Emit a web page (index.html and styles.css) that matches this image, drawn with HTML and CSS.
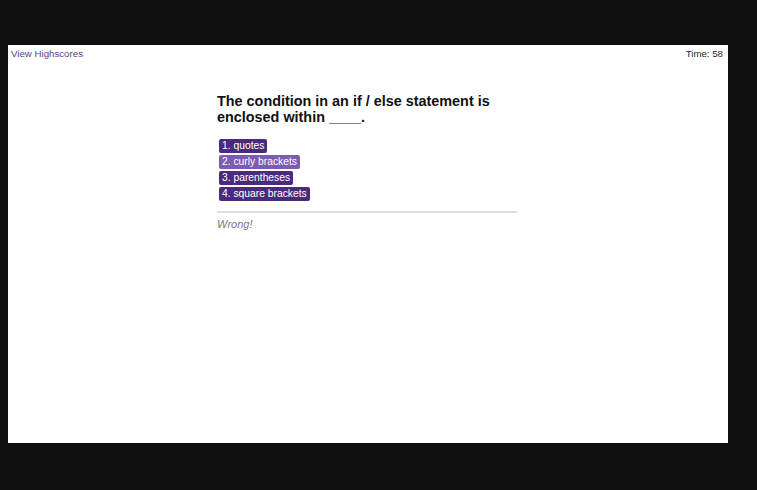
FILE: index.html
```html
<!DOCTYPE html>
<html lang="en">
<head>
<meta charset="utf-8">
<title>Code Quiz</title>
<link rel="stylesheet" href="styles.css">
</head>
<body>
<div class="screen">
  <header class="topbar">
    <a class="highscores" href="#">View Highscores</a>
    <span class="timer">Time: 58</span>
  </header>
  <main class="quiz">
    <h1 class="question">The condition in an if / else statement is enclosed within ____.</h1>
    <div class="choices">
      <button class="choice">1. quotes</button>
      <button class="choice hover">2. curly brackets</button>
      <button class="choice">3. parentheses</button>
      <button class="choice">4. square brackets</button>
    </div>
    <div class="feedback">Wrong!</div>
  </main>
</div>
</body>
</html>
```
FILE: styles.css
```css
html, body {
  margin: 0;
  padding: 0;
  background: #0f0f0f;
  height: 100%;
}
.screen {
  margin: 45px 0 0 8px;
  width: 720px;
  height: 398px;
  background: #ffffff;
  font-family: "Liberation Sans", Arial, sans-serif;
  overflow: hidden;
}
.topbar {
  display: flex;
  justify-content: space-between;
  align-items: center;
  padding: 3px 5px 0 3px;
  font-size: 9.7px;
  line-height: 11px;
}
.highscores {
  color: #574588;
  text-decoration: none;
}
.timer {
  color: #2a2a2a;
}
.quiz {
  width: 300px;
  padding-right: 2px;
  margin: 34px auto 0;
}
.question {
  margin: 0;
  font-size: 14.4px;
  line-height: 16px;
  font-weight: bold;
  color: #111;
}
.choices {
  display: flex;
  flex-direction: column;
  align-items: flex-start;
  gap: 2px;
  margin: 14px 0 0 2px;
}
.choice {
  font-family: "Liberation Sans", Arial, sans-serif;
  font-size: 10.3px;
  line-height: 12px;
  padding: 1px 3px;
  border: none;
  border-radius: 2px;
  background: #4a2a7a;
  color: #fff;
}
.choice.hover {
  background: #7b5cb0;
}
.feedback {
  margin-top: 10px;
  border-top: 2px solid #dedede;
  padding-top: 5px;
  font-size: 11px;
  font-style: italic;
  color: #7a7a7a;
}
```
